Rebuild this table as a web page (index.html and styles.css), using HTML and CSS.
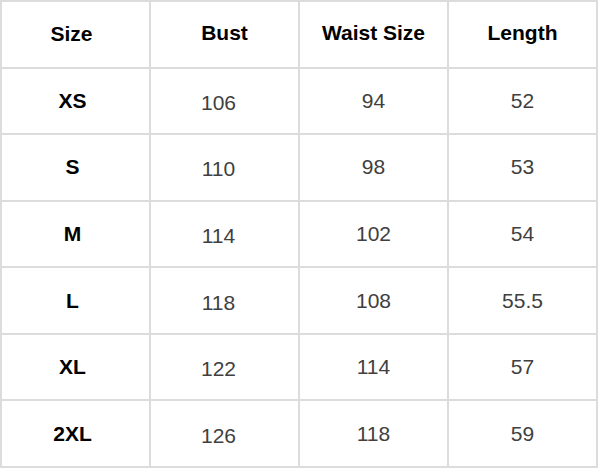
FILE: index.html
```html
<!DOCTYPE html>
<html>
<head>
<meta charset="utf-8">
<link rel="stylesheet" href="styles.css">
</head>
<body>
<div class="chart">
  <div class="cell head lead">Size</div>
  <div class="cell head">Bust</div>
  <div class="cell head">Waist Size</div>
  <div class="cell head">Length</div>

  <div class="cell size">XS</div>
  <div class="cell val bust">106</div>
  <div class="cell val">94</div>
  <div class="cell val">52</div>

  <div class="cell size">S</div>
  <div class="cell val bust">110</div>
  <div class="cell val">98</div>
  <div class="cell val">53</div>

  <div class="cell size">M</div>
  <div class="cell val bust">114</div>
  <div class="cell val">102</div>
  <div class="cell val">54</div>

  <div class="cell size">L</div>
  <div class="cell val bust">118</div>
  <div class="cell val">108</div>
  <div class="cell val">55.5</div>

  <div class="cell size">XL</div>
  <div class="cell val bust">122</div>
  <div class="cell val">114</div>
  <div class="cell val">57</div>

  <div class="cell size">2XL</div>
  <div class="cell val bust">126</div>
  <div class="cell val">118</div>
  <div class="cell val">59</div>
</div>
</body>
</html>
```

FILE: styles.css
```css
html, body {
  margin: 0;
  padding: 0;
  background: #ffffff;
}

.chart {
  box-sizing: border-box;
  width: 598px;
  height: 468px;
  display: grid;
  grid-template-columns: repeat(4, 1fr);
  grid-template-rows: repeat(7, 1fr);
  gap: 2px;
  padding: 2px;
  background: #dcdcdc;
  font-family: "Liberation Sans", Arial, sans-serif;
}

.cell {
  background: #ffffff;
  display: flex;
  align-items: center;
  justify-content: center;
}

.head {
  font-size: 21px;
  font-weight: bold;
  color: #000000;
  padding-bottom: 2px;
}

.lead {
  padding-right: 8px;
  padding-bottom: 0;
}

.size {
  font-size: 21px;
  font-weight: bold;
  color: #000000;
  padding-right: 6px;
}

.val {
  font-size: 21px;
  color: #404040;
}

.bust {
  padding-right: 12px;
  padding-top: 4px;
}
```
